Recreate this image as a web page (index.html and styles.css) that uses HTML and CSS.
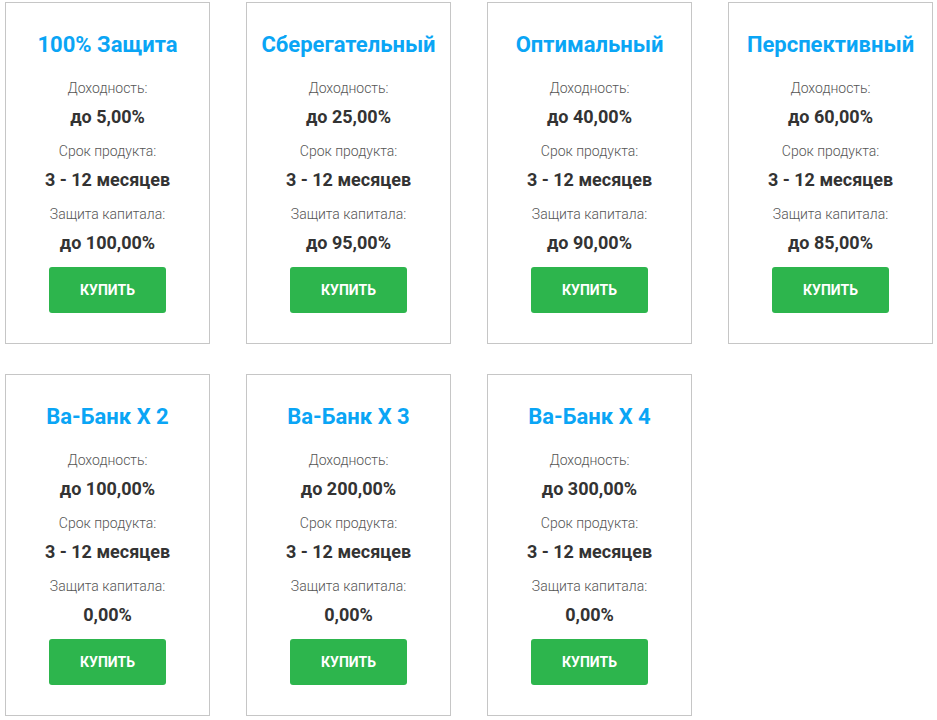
FILE: index.html
```html
<!DOCTYPE html>
<html lang="ru">
<head>
<meta charset="utf-8">
<title>Продукты</title>
<link rel="stylesheet" href="styles.css">
</head>
<body>
  <div class="products">
    <div class="product">
      <h2 class="product-title">100% Защита</h2>
      <div class="label">Доходность:</div>
      <div class="value">до 5,00%</div>
      <div class="label">Срок продукта:</div>
      <div class="value">3 - 12 месяцев</div>
      <div class="label">Защита капитала:</div>
      <div class="value">до 100,00%</div>
      <a href="#" class="buy">Купить</a>
    </div>
    <div class="product">
      <h2 class="product-title">Сберегательный</h2>
      <div class="label">Доходность:</div>
      <div class="value">до 25,00%</div>
      <div class="label">Срок продукта:</div>
      <div class="value">3 - 12 месяцев</div>
      <div class="label">Защита капитала:</div>
      <div class="value">до 95,00%</div>
      <a href="#" class="buy">Купить</a>
    </div>
    <div class="product">
      <h2 class="product-title">Оптимальный</h2>
      <div class="label">Доходность:</div>
      <div class="value">до 40,00%</div>
      <div class="label">Срок продукта:</div>
      <div class="value">3 - 12 месяцев</div>
      <div class="label">Защита капитала:</div>
      <div class="value">до 90,00%</div>
      <a href="#" class="buy">Купить</a>
    </div>
    <div class="product">
      <h2 class="product-title">Перспективный</h2>
      <div class="label">Доходность:</div>
      <div class="value">до 60,00%</div>
      <div class="label">Срок продукта:</div>
      <div class="value">3 - 12 месяцев</div>
      <div class="label">Защита капитала:</div>
      <div class="value">до 85,00%</div>
      <a href="#" class="buy">Купить</a>
    </div>
    <div class="product">
      <h2 class="product-title">Ва-Банк X 2</h2>
      <div class="label">Доходность:</div>
      <div class="value">до 100,00%</div>
      <div class="label">Срок продукта:</div>
      <div class="value">3 - 12 месяцев</div>
      <div class="label">Защита капитала:</div>
      <div class="value">0,00%</div>
      <a href="#" class="buy">Купить</a>
    </div>
    <div class="product">
      <h2 class="product-title">Ва-Банк X 3</h2>
      <div class="label">Доходность:</div>
      <div class="value">до 200,00%</div>
      <div class="label">Срок продукта:</div>
      <div class="value">3 - 12 месяцев</div>
      <div class="label">Защита капитала:</div>
      <div class="value">0,00%</div>
      <a href="#" class="buy">Купить</a>
    </div>
    <div class="product">
      <h2 class="product-title">Ва-Банк X 4</h2>
      <div class="label">Доходность:</div>
      <div class="value">до 300,00%</div>
      <div class="label">Срок продукта:</div>
      <div class="value">3 - 12 месяцев</div>
      <div class="label">Защита капитала:</div>
      <div class="value">0,00%</div>
      <a href="#" class="buy">Купить</a>
    </div>
  </div>
</body>
</html>
```

FILE: styles.css
```css
body {
  margin: 0;
  padding: 2px 5px;
  font-family: Roboto, "Liberation Sans", sans-serif;
  background-color: #fff;
}

.products {
  display: grid;
  grid-template-columns: repeat(4, 205px);
  column-gap: 36px;
  row-gap: 30px;
}

.product {
  box-sizing: border-box;
  height: 342px;
  border: 1px solid #c6c6c6;
  padding-top: 29px;
  display: flex;
  flex-direction: column;
  align-items: center;
  text-align: center;
}

.product-title {
  margin: 0 0 20px;
  font-size: 22px;
  line-height: 26px;
  font-weight: 700;
  color: #0aa5f5;
}

.label {
  font-size: 14px;
  line-height: 20px;
  font-weight: 300;
  color: #555;
}

.value {
  margin: 8px 0 13px;
  font-size: 18px;
  line-height: 22px;
  font-weight: 700;
  color: #333;
}

.buy {
  display: flex;
  justify-content: center;
  align-items: center;
  width: 117px;
  height: 46px;
  border-radius: 3px;
  background-color: #2db54d;
  color: #fff;
  font-size: 14px;
  font-weight: 700;
  text-transform: uppercase;
  text-decoration: none;
}
```
